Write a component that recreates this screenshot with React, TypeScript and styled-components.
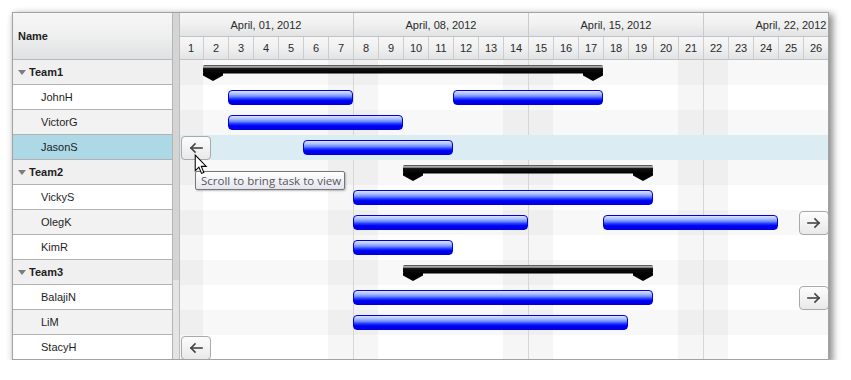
import React from "react";
import styled, { createGlobalStyle } from "styled-components";

const Global = createGlobalStyle`
  html, body { margin: 0; padding: 0; background: #ffffff; }
  body { font-family: "Liberation Sans", Arial, sans-serif; }
`;

const DAY_W = 25;
const ORIGIN = -2; // timeline scrolled 2px
const dayLeft = (d: number) => (d - 1) * DAY_W;

type Bar = { from: number; to: number };
type Row = {
  name: string;
  team?: boolean;
  bars?: Bar[];
  summary?: Bar;
  selected?: boolean;
  leftArrow?: boolean;
  rightArrow?: boolean;
};

const rows: Row[] = [
  { name: "Team1", team: true, summary: { from: 2, to: 17 } },
  { name: "JohnH", bars: [{ from: 3, to: 7 }, { from: 12, to: 17 }] },
  { name: "VictorG", bars: [{ from: 3, to: 9 }] },
  { name: "JasonS", bars: [{ from: 6, to: 11 }], selected: true, leftArrow: true },
  { name: "Team2", team: true, summary: { from: 10, to: 19 } },
  { name: "VickyS", bars: [{ from: 8, to: 19 }] },
  { name: "OlegK", bars: [{ from: 8, to: 14 }, { from: 18, to: 24 }], rightArrow: true },
  { name: "KimR", bars: [{ from: 8, to: 11 }] },
  { name: "Team3", team: true, summary: { from: 10, to: 19 } },
  { name: "BalajiN", bars: [{ from: 8, to: 19 }], rightArrow: true },
  { name: "LiM", bars: [{ from: 8, to: 18 }] },
  { name: "StacyH", leftArrow: true },
];

const days = Array.from({ length: 26 }, (_, i) => i + 1);
const weeks = ["April, 01, 2012", "April, 08, 2012", "April, 15, 2012", "April, 22, 2012"];
const isWeekend = (d: number) => d % 7 === 0 || d % 7 === 1;

const Frame = styled.div`
  position: relative;
  margin: 12px 0 0 12px;
  width: 817px;
  height: 348px;
  box-sizing: border-box;
  border: 1px solid #a3a3a3;
  display: flex;
  overflow: hidden;
  background: #fff;
  box-shadow: 3px 3px 7px 1px rgba(0, 0, 0, 0.45);
`;

const Grid = styled.div`
  width: 160px;
  flex: none;
  box-sizing: border-box;
  border-right: 1px solid #b4b4b4;
  display: flex;
  flex-direction: column;
`;

const GridHeader = styled.div`
  height: 47px;
  flex: none;
  box-sizing: border-box;
  border-bottom: 1px solid #b9b9b9;
  background: linear-gradient(to bottom, #f6f6f6 0%, #f0f0f0 45%, #dfe1e3 100%);
  display: flex;
  align-items: center;
  padding-left: 5px;
  font-weight: bold;
  font-size: 11px;
  color: #222;
`;

const GridRow = styled.div<{ $team?: boolean; $odd?: boolean; $selected?: boolean }>`
  height: 25px;
  flex: none;
  box-sizing: border-box;
  border-bottom: 1px solid #b2b2b2;
  display: flex;
  align-items: center;
  gap: 3px;
  padding-left: ${(p) => (p.$team ? "5px" : "28px")};
  font-size: 11px;
  font-weight: ${(p) => (p.$team ? "bold" : "normal")};
  color: #1e1e1e;
  background: ${(p) =>
    p.$selected ? "#add8e6" : p.$team ? "#f0f0f0" : p.$odd ? "#f2f2f2" : "#ffffff"};
`;

const Caret = styled.span`
  width: 0;
  height: 0;
  border-left: 4px solid transparent;
  border-right: 4px solid transparent;
  border-top: 5px solid #7d7d7d;
`;

const Splitter = styled.div`
  width: 7px;
  flex: none;
  box-sizing: border-box;
  border-right: 1px solid #bdbdbd;
  display: flex;
  flex-direction: column;
`;

const SplitTrack = styled.div<{ $tone: "dark" | "light" }>`
  flex: ${(p) => (p.$tone === "dark" ? "0 0 267px" : "1 1 auto")};
  background: ${(p) => (p.$tone === "dark" ? "#d4d4d4" : "#e4e4e4")};
`;

const Chart = styled.div`
  flex: 1 1 auto;
  overflow: hidden;
  position: relative;
  display: flex;
  flex-direction: column;
`;

const Timeline = styled.div`
  margin-left: ${ORIGIN}px;
  width: ${28 * DAY_W}px;
  display: flex;
  flex-direction: column;
`;

const HeaderBand = styled.div<{ $h: number }>`
  height: ${(p) => p.$h}px;
  display: flex;
  box-sizing: border-box;
  border-bottom: 1px solid #c3c3c3;
  background: linear-gradient(to bottom, #f7f7f7 0%, #f0f0f0 50%, #e1e3e5 100%);
`;

const WeekCell = styled.div`
  width: ${7 * DAY_W}px;
  flex: none;
  box-sizing: border-box;
  border-left: 1px solid #cbcbcb;
  display: flex;
  align-items: center;
  justify-content: center;
  font-size: 11px;
  color: #2a2a2a;
`;

const DayCell = styled.div`
  width: ${DAY_W}px;
  flex: none;
  box-sizing: border-box;
  border-left: 1px solid #cdcdcd;
  display: flex;
  align-items: center;
  justify-content: center;
  font-size: 11px;
  color: #2a2a2a;
`;

const Body = styled.div`
  position: relative;
  background: repeating-linear-gradient(
    to bottom,
    #f8f8f8 0px,
    #f8f8f8 25px,
    #ffffff 25px,
    #ffffff 50px
  );
`;

const Columns = styled.div`
  position: absolute;
  inset: 0;
  display: flex;
  pointer-events: none;
`;

const DayColumn = styled.div<{ $weekend: boolean; $weekStart: boolean }>`
  width: ${DAY_W}px;
  flex: none;
  box-sizing: border-box;
  border-left: 1px solid ${(p) => (p.$weekStart ? "#d6d6d6" : "transparent")};
  background: ${(p) => (p.$weekend ? "rgba(0,0,0,0.035)" : "transparent")};
`;

const ChartRow = styled.div<{ $selected?: boolean }>`
  position: relative;
  height: 25px;
  background: ${(p) => (p.$selected ? "#dcecf3" : "transparent")};
`;

const TaskBar = styled.div`
  position: absolute;
  top: 5px;
  height: 15px;
  box-sizing: border-box;
  border: 1px solid #0000d8;
  border-radius: 4px;
  background: linear-gradient(
    to bottom,
    #dbe4ff 0%,
    #aebfff 22%,
    #6e89ff 42%,
    #2040ff 58%,
    #0000f2 75%,
    #0000e8 100%
  );
`;

const SummaryWrap = styled.svg`
  position: absolute;
  top: 5px;
  overflow: visible;
`;

const ScrollButton = styled.button<{ $side: "left" | "right" }>`
  position: absolute;
  top: 1px;
  left: ${(p) => (p.$side === "left" ? 3 : 621)}px;
  width: 30px;
  height: 24px;
  padding: 0;
  box-sizing: border-box;
  border: 1px solid #a9a9a9;
  border-radius: 4px;
  background: linear-gradient(to bottom, #fcfcfc 0%, #f3f3f3 50%, #e9e9e9 100%);
  display: flex;
  align-items: center;
  justify-content: center;
`;

const Tooltip = styled.div`
  position: absolute;
  left: 15px;
  top: 158px;
  width: 150px;
  height: 19px;
  box-sizing: border-box;
  border: 1px solid #767676;
  border-radius: 2px;
  background: linear-gradient(to bottom, #ffffff 0%, #e4e5f0 100%);
  box-shadow: 1px 1px 2px rgba(0, 0, 0, 0.25);
  font-family: "Open Sans", "DejaVu Sans", sans-serif;
  font-size: 11.5px;
  line-height: 17px;
  color: #575757;
  padding-left: 5px;
  white-space: nowrap;
`;

const Cursor = styled.svg`
  position: absolute;
  left: 14px;
  top: 141px;
`;

const Arrow = ({ dir }: { dir: "left" | "right" }) => (
  <svg width="16" height="12" viewBox="0 0 16 12">
    <g
      transform={dir === "right" ? "translate(16,0) scale(-1,1)" : undefined}
      stroke="#444"
      strokeWidth="1.6"
      fill="none"
      strokeLinecap="square"
    >
      <line x1="3" y1="6" x2="14" y2="6" />
      <polyline points="7,2 3,6 7,10" />
    </g>
  </svg>
);

const Summary = ({ from, to }: Bar) => {
  const left = dayLeft(from);
  const w = dayLeft(to + 1) - left;
  return (
    <SummaryWrap width={w} height={16} style={{ left }} viewBox={`0 0 ${w} 16`}>
      <defs>
        <linearGradient id="sg" x1="0" y1="0" x2="0" y2="1">
          <stop offset="0" stopColor="#333" />
          <stop offset="0.22" stopColor="#c8c8c8" />
          <stop offset="0.42" stopColor="#111" />
          <stop offset="1" stopColor="#000" />
        </linearGradient>
      </defs>
      <rect x="0" y="0" width={w} height="8.5" rx="1.5" fill="url(#sg)" />
      <polygon points="0,8 20,8 20,10.5 10,16 0,10.5" fill="#000" />
      <polygon
        points={`${w - 20},8 ${w},8 ${w},10.5 ${w - 10},16 ${w - 20},10.5`}
        fill="#000"
      />
    </SummaryWrap>
  );
};

export default function App() {
  return (
    <>
      <Global />
      <Frame>
        <Grid>
          <GridHeader>Name</GridHeader>
          {rows.map((r, i) => (
            <GridRow key={r.name} $team={r.team} $odd={i % 2 === 0} $selected={r.selected}>
              {r.team && <Caret />}
              {r.name}
            </GridRow>
          ))}
        </Grid>
        <Splitter>
          <SplitTrack $tone="dark" />
          <SplitTrack $tone="light" />
        </Splitter>
        <Chart>
          <Timeline>
            <HeaderBand $h={24}>
              {weeks.map((w) => (
                <WeekCell key={w}>{w}</WeekCell>
              ))}
            </HeaderBand>
            <HeaderBand $h={23}>
              {days.map((d) => (
                <DayCell key={d}>{d}</DayCell>
              ))}
            </HeaderBand>
            <Body>
              <Columns>
                {days.map((d) => (
                  <DayColumn key={d} $weekend={isWeekend(d)} $weekStart={d % 7 === 1 && d > 1} />
                ))}
              </Columns>
              {rows.map((r) => (
                <ChartRow key={r.name} $selected={r.selected}>
                  {r.summary && <Summary {...r.summary} />}
                  {r.bars?.map((b, j) => (
                    <TaskBar
                      key={j}
                      style={{ left: dayLeft(b.from), width: dayLeft(b.to + 1) - dayLeft(b.from) }}
                    />
                  ))}
                  {r.leftArrow && (
                    <ScrollButton $side="left">
                      <Arrow dir="left" />
                    </ScrollButton>
                  )}
                  {r.rightArrow && (
                    <ScrollButton $side="right">
                      <Arrow dir="right" />
                    </ScrollButton>
                  )}
                </ChartRow>
              ))}
            </Body>
          </Timeline>
          <Tooltip>Scroll to bring task to view</Tooltip>
          <Cursor width="14" height="21" viewBox="0 0 13 20">
            <path
              d="M1 1 L1 16 L4.5 12.5 L7 18.5 L9.2 17.6 L6.8 11.8 L11.5 11.8 Z"
              fill="#fff"
              stroke="#000"
              strokeWidth="1"
              strokeLinejoin="miter"
            />
          </Cursor>
        </Chart>
      </Frame>
    </>
  );
}
